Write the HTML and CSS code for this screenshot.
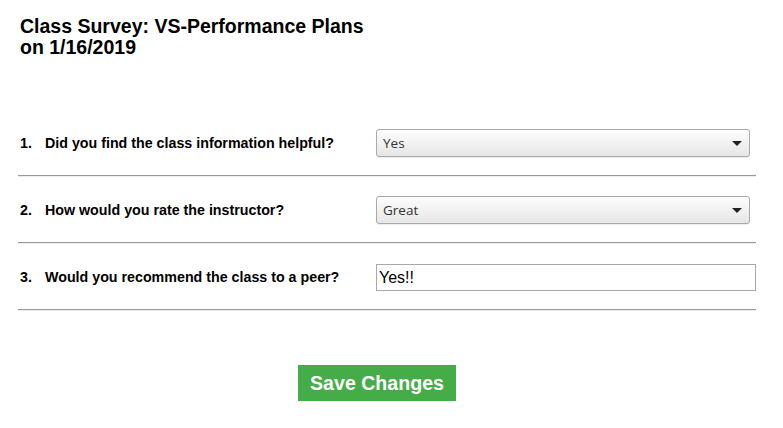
FILE: index.html
```html
<!DOCTYPE html>
<html>
<head>
<meta charset="utf-8">
<link rel="stylesheet" href="styles.css">
</head>
<body>
<div class="page">
  <h1 class="title">Class Survey: VS-Performance Plans<br>on 1/16/2019</h1>
  <div class="questions">
    <div class="row">
      <div class="label"><span class="num">1.</span><span class="q">Did you find the class information helpful?</span></div>
      <div class="select"><span>Yes</span><span class="arrow"></span></div>
    </div>
    <div class="row">
      <div class="label"><span class="num">2.</span><span class="q">How would you rate the instructor?</span></div>
      <div class="select"><span>Great</span><span class="arrow"></span></div>
    </div>
    <div class="row">
      <div class="label"><span class="num">3.</span><span class="q">Would you recommend the class to a peer?</span></div>
      <div class="textbox">Yes!!</div>
    </div>
  </div>
  <div class="actions">
    <button class="save">Save Changes</button>
  </div>
</div>
</body>
</html>
```
FILE: styles.css
```css
html, body { margin: 0; padding: 0; background: #fff; }
body { font-family: "Liberation Sans", Arial, sans-serif; color: #000; }
.page { padding: 16px 27px 0 18px; width: 738px; }
.title { margin: 0 0 0 2px; font-size: 19.5px; font-weight: bold; line-height: 21px; }
.questions { margin-top: 51px; }
.row {
  display: flex; align-items: center; justify-content: space-between;
  padding: 20px 0 18px 0;
  border-bottom: 1px solid #9a9a9a;
  box-shadow: 0 1px 0 #ececec;
}
.label { display: flex; font-size: 14.25px; font-weight: bold; padding-left: 2px; }
.num { width: 25px; }
.select {
  width: 366px; height: 26px; margin-right: 6px;
  border: 1px solid #a9a9a9; border-radius: 3px;
  background: linear-gradient(#fdfdfd, #e6e6e6);
  box-shadow: 0 1px 1px rgba(0,0,0,0.08);
  display: flex; align-items: center; justify-content: space-between;
  font-family: "Open Sans", "Noto Sans", sans-serif; font-size: 13.5px; color: #333;
  padding-left: 6px;
}
.arrow {
  width: 0; height: 0; margin-right: 7px;
  border-left: 5px solid transparent; border-right: 5px solid transparent;
  border-top: 5px solid #222;
}
.textbox {
  width: 376px; height: 25px; border: 1px solid #a9a9a9;
  font-size: 16px; line-height: 25px; padding-left: 2px; color: #000;
  margin-top: 1px;
}
.actions { display: flex; justify-content: center; padding-top: 55px; padding-right: 20px; }
.save {
  background: #45ad47; color: #fff; border: none;
  font-family: "Liberation Sans", Arial, sans-serif; font-weight: bold; font-size: 19.6px;
  width: 158px; height: 36px; padding: 0;
}
```
